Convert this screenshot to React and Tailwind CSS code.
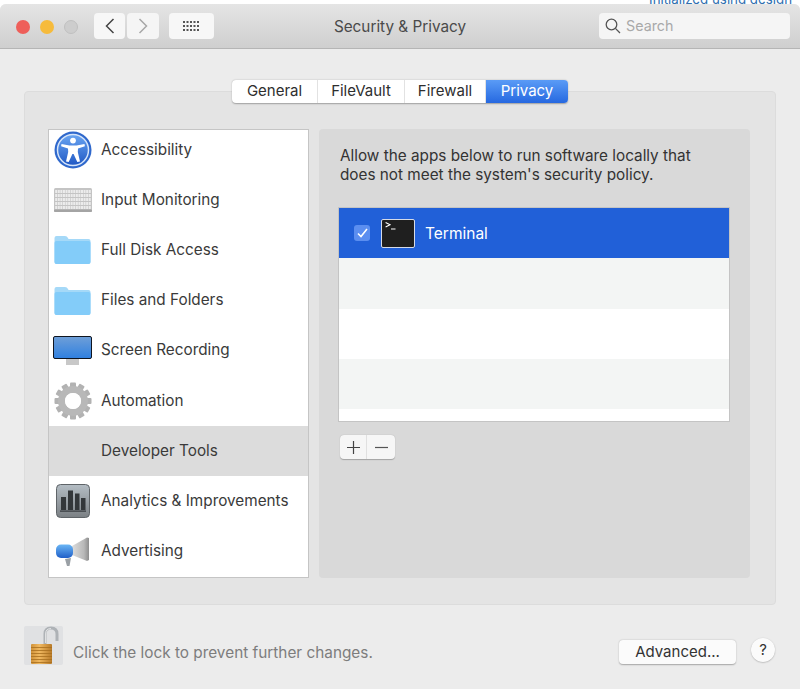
import React from "react";

const font = { fontFamily: "Inter, 'Liberation Sans', sans-serif" };

const AccessibilityIcon = () => (
  <svg width="38" height="38" viewBox="0 0 38 38">
    <defs>
      <linearGradient id="acc" x1="0" y1="0" x2="0" y2="1">
        <stop offset="0" stopColor="#6aa5f2" />
        <stop offset="1" stopColor="#2058c4" />
      </linearGradient>
    </defs>
    <circle cx="19" cy="19" r="18.5" fill="#2f68cc" />
    <circle cx="19" cy="19" r="15.5" fill="url(#acc)" stroke="#d6e5f9" strokeWidth="1.5" />
    <circle cx="19" cy="9.6" r="2.9" fill="#fff" />
    <path d="M7.5 13 L15.5 14.4 H22.5 L30.5 13 L30.9 15.2 L24 17.4 L23.8 21 L26 30.5 L23.3 31 L19.6 23 H18.4 L14.7 31 L12 30.5 L14.2 21 L14 17.4 L7.1 15.2 Z" fill="#fff" />
  </svg>
);

const KeyboardIcon = () => (
  <svg width="38" height="24" viewBox="0 0 38 24">
    <rect x="0" y="0" width="38" height="24" rx="1.5" fill="#c4c4c4" />
    <rect x="0" y="21.5" width="38" height="2.5" rx="1" fill="#a4a4a4" />
    {[2, 6, 10, 14, 18].map((y) => (
      <g key={y}>
        {Array.from({ length: 14 }).map((_, i) => (
          <rect key={i} x={1.2 + i * 2.58} y={y} width="2" height="3" fill="#ececec" />
        ))}
      </g>
    ))}
  </svg>
);

const FolderIcon = () => (
  <svg width="37" height="30" viewBox="0 0 37 30">
    <path d="M0.5 3 Q0.5 1 2.5 1 H11 Q13 1 14 3 L14.5 4 H34.5 Q36.5 4 36.5 6 V27 Q36.5 29 34.5 29 H2.5 Q0.5 29 0.5 27 Z" fill="#a5d9f8" />
    <rect x="0.5" y="6" width="36" height="23" rx="2" fill="#83ccf9" />
  </svg>
);

const MonitorIcon = () => (
  <svg width="39" height="29" viewBox="0 0 39 29">
    <defs>
      <linearGradient id="scr" x1="0" y1="0" x2="0" y2="1">
        <stop offset="0" stopColor="#6f9fd8" />
        <stop offset="1" stopColor="#2f80e0" />
      </linearGradient>
    </defs>
    <rect x="13" y="22" width="13" height="7" fill="#c8c8c8" />
    <rect x="0.5" y="0.5" width="38" height="22" rx="1.5" fill="url(#scr)" stroke="#10151f" />
  </svg>
);

const GearIcon = () => {
  const teeth = Array.from({ length: 12 }, (_, i) => i * 30);
  return (
    <svg width="38" height="38" viewBox="0 0 38 38">
      {teeth.map((a) => (
        <rect key={a} x="16" y="0.5" width="6" height="8" rx="1" fill="#b2b2b2" transform={`rotate(${a} 19 19)`} />
      ))}
      <circle cx="19" cy="19" r="11.5" fill="none" stroke="#b8b8b8" strokeWidth="7" />
      <circle cx="19" cy="19" r="8" fill="#fff" />
    </svg>
  );
};

const AnalyticsIcon = () => (
  <svg width="34" height="34" viewBox="0 0 34 34">
    <defs>
      <linearGradient id="ana" x1="0" y1="0" x2="0" y2="1">
        <stop offset="0" stopColor="#b4bdc4" />
        <stop offset="1" stopColor="#7b8084" />
      </linearGradient>
    </defs>
    <rect x="0.5" y="0.5" width="33" height="33" rx="4" fill="url(#ana)" stroke="#5f6468" />
    <rect x="5" y="13" width="5" height="13" fill="#33373a" />
    <rect x="12" y="6.5" width="5" height="19.5" fill="#33373a" />
    <rect x="19" y="9.5" width="4.5" height="16.5" fill="#33373a" />
    <rect x="25" y="14" width="4.5" height="12" fill="#33373a" />
    <rect x="4" y="26.5" width="26" height="1.2" fill="#33373a" />
  </svg>
);

const MegaphoneIcon = () => (
  <svg width="34" height="30" viewBox="0 0 34 30">
    <defs>
      <linearGradient id="meg" x1="0" y1="0" x2="0" y2="1">
        <stop offset="0" stopColor="#6bb6f5" />
        <stop offset="1" stopColor="#1f5fc8" />
      </linearGradient>
      <linearGradient id="horn" x1="0" y1="0" x2="1" y2="0">
        <stop offset="0" stopColor="#dcdcdc" />
        <stop offset="0.7" stopColor="#b8b8b8" />
        <stop offset="1" stopColor="#8e8e8e" />
      </linearGradient>
    </defs>
    <path d="M9 22 L15 21 L13.5 29 L11 29 Z" fill="#9aa0a5" />
    <path d="M16 9 L31 0.5 L33 1 V23 L31 24 L16 18 Z" fill="url(#horn)" />
    <rect x="0" y="7.5" width="17" height="13.5" rx="5" fill="url(#meg)" />
  </svg>
);

const TerminalIcon = () => (
  <svg width="34" height="29" viewBox="0 0 34 29">
    <rect x="0.5" y="0.5" width="33" height="28" rx="1.5" fill="#1f1f1f" stroke="#d5dbe8" />
    <path d="M4.6 3.6 L9 5.8 L4.6 8" fill="none" stroke="#fff" strokeWidth="1.1" />
    <path d="M10 10 H14.5" stroke="#fff" strokeWidth="1.1" />
  </svg>
);

const LockIcon = () => (
  <svg width="39" height="39" viewBox="0 0 39 39">
    <defs>
      <linearGradient id="lock" x1="0" y1="0" x2="1" y2="0">
        <stop offset="0" stopColor="#d0923a" />
        <stop offset="0.4" stopColor="#f0b860" />
        <stop offset="1" stopColor="#b87a28" />
      </linearGradient>
    </defs>
    <rect width="39" height="39" rx="2" fill="#e0e1e3" />
    <path d="M21 18 V8 Q21 2 27 2 Q33 2 33 8 V15" fill="none" stroke="#aeb2b6" strokeWidth="3" />
    <path d="M21.6 17 V8 Q21.6 2.6 27 2.6" fill="none" stroke="#f4f4f4" strokeWidth="0.8" />
    <rect x="7" y="18" width="21" height="20" rx="1" fill="url(#lock)" />
    {[21, 24, 27, 30, 33, 36].map((y) => (
      <rect key={y} x="7" y={y} width="21" height="0.8" fill="#a86e1e" />
    ))}
  </svg>
);

const rows = [
  { label: "Accessibility", icon: <AccessibilityIcon /> },
  { label: "Input Monitoring", icon: <KeyboardIcon /> },
  { label: "Full Disk Access", icon: <FolderIcon /> },
  { label: "Files and Folders", icon: <FolderIcon /> },
  { label: "Screen Recording", icon: <MonitorIcon /> },
  { label: "Automation", icon: <GearIcon /> },
  { label: "Developer Tools", selected: true },
  { label: "Analytics & Improvements", icon: <AnalyticsIcon /> },
  { label: "Advertising", icon: <MegaphoneIcon /> },
];

const tabs = [
  { label: "General", width: "w-[86px]" },
  { label: "FileVault", width: "w-[87px]" },
  { label: "Firewall", width: "w-[81px]" },
];

export default function App() {
  return (
    <div style={font} className="w-[800px] h-[689px] overflow-hidden bg-white text-[#333] flex flex-col">
      {/* sliver of the page behind the window */}
      <div className="h-1 overflow-hidden flex justify-end pr-[8px]">
        <span className="text-[13.3px] leading-[4px] text-[#2f6fb0] -translate-y-[3px] whitespace-nowrap">
          Initialized using design
        </span>
      </div>

      <div className="flex-1 flex flex-col rounded-t-md overflow-hidden bg-[#ececec]">
        {/* title bar */}
        <div className="h-[45px] shrink-0 flex items-center pl-4 pr-[10px] bg-gradient-to-b from-[#e5e5e5] to-[#cfcfcf] border-b border-[#b5b5b5]">
          <div className="flex gap-[10px] mr-[16px] mt-[2px]">
            <span className="w-[14px] h-[14px] rounded-full bg-[#ee5f5a]" />
            <span className="w-[14px] h-[14px] rounded-full bg-[#f6bb3c]" />
            <span className="w-[14px] h-[14px] rounded-full bg-[#cdcdcd] border border-[#c0c0c0]" />
          </div>
          <div className="flex gap-[2px] mr-[10px]">
            <div className="w-[31px] h-[26px] rounded-[4px] bg-[#f7f7f7] flex items-center justify-center">
              <svg width="10" height="16" viewBox="0 0 10 16"><path d="M8.5 1 L1.5 8 L8.5 15" fill="none" stroke="#444" strokeWidth="1.5" /></svg>
            </div>
            <div className="w-[32px] h-[26px] rounded-[4px] bg-[#f5f5f5] flex items-center justify-center">
              <svg width="10" height="16" viewBox="0 0 10 16"><path d="M1.5 1 L8.5 8 L1.5 15" fill="none" stroke="#a8a8a8" strokeWidth="1.5" /></svg>
            </div>
          </div>
          <div className="w-[45px] h-[26px] rounded-[4px] bg-[#f7f7f7] flex items-center justify-center">
            <svg width="18" height="13" viewBox="0 0 18 13" fill="#555">
              {[1, 5, 9].map((y) =>
                [0, 3.5, 7, 10.5, 14].map((x) => <rect key={`${x}-${y}`} x={x} y={y} width="2" height="2" />),
              )}
            </svg>
          </div>
          <div className="w-[376px] text-center text-[15.3px] text-[#4a4a4a] ml-[-2px] mt-[2px] whitespace-nowrap">Security &amp; Privacy</div>
          <div className="ml-auto w-[191px] h-[26px] rounded-[4px] bg-[#f5f5f5] flex items-center pl-[6px] gap-[5px]">
            <svg width="16" height="16" viewBox="0 0 16 16" fill="none" stroke="#555" strokeWidth="1.3">
              <circle cx="6.5" cy="6.5" r="5.3" />
              <path d="M10.4 10.4 L15 15" />
            </svg>
            <span className="text-[14.3px] text-[#a9a9a9]">Search</span>
          </div>
        </div>

        {/* body */}
        <div className="flex-1 flex flex-col px-6 pt-[31px]">
          <div className="relative z-10 flex justify-center mb-[-12px]">
            <div className="flex h-[23px] rounded-[4px] bg-white shadow-[0_0.5px_1.5px_rgba(0,0,0,0.3)] text-[15px] overflow-hidden">
              {tabs.map((tab) => (
                <div key={tab.label} className={`${tab.width} flex items-center justify-center border-r border-[#e2e2e2] text-[#2e2e2e]`}>
                  {tab.label}
                </div>
              ))}
              <div className="w-[82px] flex items-center justify-center bg-gradient-to-b from-[#5a9bf6] to-[#2668e0] text-white">
                Privacy
              </div>
            </div>
          </div>

          <div className="h-[514px] rounded-[4px] bg-[#e4e4e4] border border-[#dcdcdc] flex gap-[10px] pl-[23px] pr-[25px] pt-[37px]">
            <div className="w-[261px] h-[449px] bg-white border border-[#c5c5c5] shrink-0 overflow-hidden">
              {/* the list is scrolled a few pixels */}
              <div className="-mt-[5px]">
                {rows.map((row) => (
                  <div
                    key={row.label}
                    className={`h-[50.2px] flex items-center text-[15.3px] text-[#3a3a3a] whitespace-nowrap ${row.selected ? "bg-[#dcdcdc]" : ""}`}
                  >
                    <div className="w-[52px] shrink-0 flex items-center justify-center pr-[5px]">{row.icon}</div>
                    <span className="-translate-y-[0.5px]">{row.label}</span>
                  </div>
                ))}
              </div>
            </div>

            <div className="flex-1 h-[449px] rounded-[4px] bg-[#d9d9d9] pl-[19px] pr-[20px] pt-[17px]">
              <p className="ml-[2px] text-[15.3px] leading-[19px] text-[#333] whitespace-nowrap">
                Allow the apps below to run software locally that
                <br />
                does not meet the system's security policy.
              </p>
              <div className="mt-[23px] h-[215px] bg-white border border-[#c4c4c4] overflow-hidden">
                <div className="h-[50px] bg-[#2160d8] flex items-center pl-[15px] text-white text-[15.5px]">
                  <span className="w-4 h-4 rounded-[3px] bg-[#5b8ef0] flex items-center justify-center mr-[11px]">
                    <svg width="11" height="10" viewBox="0 0 11 10"><path d="M1 5.5 L4 8.5 L10 1" fill="none" stroke="#fff" strokeWidth="1.6" /></svg>
                  </span>
                  <TerminalIcon />
                  <span className="ml-[10px] mt-[2px]">Terminal</span>
                </div>
                <div className="h-[51px] bg-[#f3f5f4]" />
                <div className="h-[50px] bg-white" />
                <div className="h-[50px] bg-[#f3f5f4]" />
              </div>
              <div className="ml-[2px] mt-[13px] w-[55px] h-[24px] rounded-[4px] bg-[#f6f6f6] shadow-[0_0.5px_1px_rgba(0,0,0,0.25)] flex">
                <div className="w-[27px] flex items-center justify-center border-r border-[#e0e0e0]">
                  <svg width="15" height="15" viewBox="0 0 15 15"><path d="M7.5 1 V14 M1 7.5 H14" stroke="#444" strokeWidth="1.2" /></svg>
                </div>
                <div className="flex-1 flex items-center justify-center">
                  <svg width="15" height="15" viewBox="0 0 15 15"><path d="M1 7.5 H14" stroke="#555" strokeWidth="1.2" /></svg>
                </div>
              </div>
            </div>
          </div>

          {/* footer */}
          <div className="flex items-start mt-[21px]">
            <LockIcon />
            <span className="ml-[10px] mt-[15px] text-[15.35px] text-[#7d7d7d] whitespace-nowrap">Click the lock to prevent further changes.</span>
            <div className="ml-auto mt-[14px] w-[117px] h-[24px] rounded-[4px] bg-[#fbfbfb] shadow-[0_0.5px_1.5px_rgba(0,0,0,0.3)] flex items-center justify-center text-[15px] text-[#333]">
              Advanced...
            </div>
            <div className="ml-[15px] mr-[1px] mt-[12px] w-[24px] h-[24px] rounded-full bg-[#fbfbfb] shadow-[0_0.5px_1.5px_rgba(0,0,0,0.3)] flex items-center justify-center text-[15px] text-[#333]">
              ?
            </div>
          </div>
        </div>
      </div>
    </div>
  );
}
